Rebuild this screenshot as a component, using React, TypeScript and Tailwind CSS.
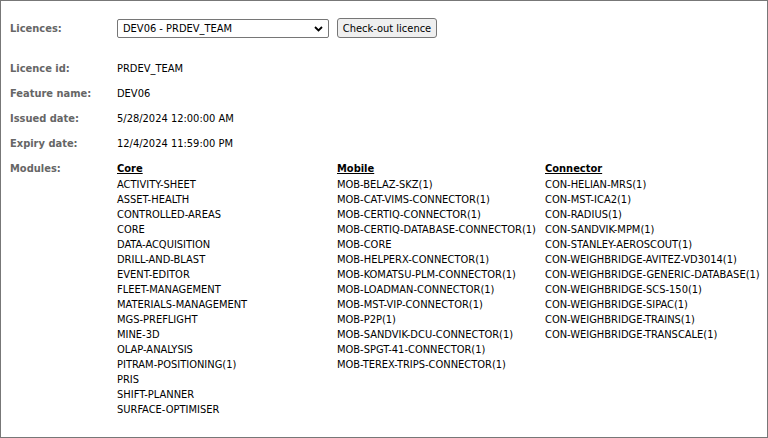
import React, { useState } from "react";

const core = [
  "ACTIVITY-SHEET",
  "ASSET-HEALTH",
  "CONTROLLED-AREAS",
  "CORE",
  "DATA-ACQUISITION",
  "DRILL-AND-BLAST",
  "EVENT-EDITOR",
  "FLEET-MANAGEMENT",
  "MATERIALS-MANAGEMENT",
  "MGS-PREFLIGHT",
  "MINE-3D",
  "OLAP-ANALYSIS",
  "PITRAM-POSITIONING(1)",
  "PRIS",
  "SHIFT-PLANNER",
  "SURFACE-OPTIMISER",
];

const mobile = [
  "MOB-BELAZ-SKZ(1)",
  "MOB-CAT-VIMS-CONNECTOR(1)",
  "MOB-CERTIQ-CONNECTOR(1)",
  "MOB-CERTIQ-DATABASE-CONNECTOR(1)",
  "MOB-CORE",
  "MOB-HELPERX-CONNECTOR(1)",
  "MOB-KOMATSU-PLM-CONNECTOR(1)",
  "MOB-LOADMAN-CONNECTOR(1)",
  "MOB-MST-VIP-CONNECTOR(1)",
  "MOB-P2P(1)",
  "MOB-SANDVIK-DCU-CONNECTOR(1)",
  "MOB-SPGT-41-CONNECTOR(1)",
  "MOB-TEREX-TRIPS-CONNECTOR(1)",
];

const connector = [
  "CON-HELIAN-MRS(1)",
  "CON-MST-ICA2(1)",
  "CON-RADIUS(1)",
  "CON-SANDVIK-MPM(1)",
  "CON-STANLEY-AEROSCOUT(1)",
  "CON-WEIGHBRIDGE-AVITEZ-VD3014(1)",
  "CON-WEIGHBRIDGE-GENERIC-DATABASE(1)",
  "CON-WEIGHBRIDGE-SCS-150(1)",
  "CON-WEIGHBRIDGE-SIPAC(1)",
  "CON-WEIGHBRIDGE-TRAINS(1)",
  "CON-WEIGHBRIDGE-TRANSCALE(1)",
];

const font = '"DejaVu Sans Condensed", "DejaVu Sans", sans-serif';

// label + value row
function InfoRow({ label, value }: { label: string; value: string }) {
  return (
    <div className="flex h-[25px]">
      <div className="w-[107px] font-bold text-[#666666]">{label}</div>
      <div>{value}</div>
    </div>
  );
}

function ModuleColumn({ title, items, width }: { title: string; items: string[]; width: string }) {
  return (
    <div className={width + " whitespace-nowrap"}>
      <div className="font-bold underline h-[16px]">{title}</div>
      {items.map((m) => (
        <div key={m}>{m}</div>
      ))}
    </div>
  );
}

export default function App() {
  const [licence, setLicence] = useState("DEV06 - PRDEV_TEAM");

  return (
    <div
      className="w-[768px] h-[438px] border border-[#777777] bg-white text-black text-[11px] leading-[15px]"
      style={{ fontFamily: font }}
    >
      <div className="pl-[9px] pt-[17px]">
        {/* Licence picker */}
        <div className="flex items-center h-[20px]">
          <div className="w-[107px] font-bold text-[#666666]">Licences:</div>
          <div className="relative w-[212px] h-[19px]">
            <select
              value={licence}
              onChange={(e) => setLicence(e.target.value)}
              className="appearance-none w-full h-full border border-[#767676] rounded-[2px] bg-white pl-[5px] text-[11px] leading-[15px] text-black outline-none"
              style={{ fontFamily: font }}
            >
              <option>DEV06 - PRDEV_TEAM</option>
            </select>
            <svg
              className="absolute right-[6px] top-[7px] pointer-events-none"
              width="9"
              height="6"
              viewBox="0 0 9 6"
            >
              <path d="M1 1 L4.5 4.5 L8 1" stroke="#000" strokeWidth="1.8" fill="none" />
            </svg>
          </div>
          <button
            className="ml-[8px] h-[20px] w-[100px] border border-[#767676] rounded-[3px] bg-[#efefef] text-[11px] text-black"
            style={{ fontFamily: font }}
          >
            Check-out licence
          </button>
        </div>

        <div className="pt-[23px]">
          <InfoRow label="Licence id:" value="PRDEV_TEAM" />
          <InfoRow label="Feature name:" value="DEV06" />
          <InfoRow label="Issued date:" value="5/28/2024 12:00:00 AM" />
          <InfoRow label="Expiry date:" value="12/4/2024 11:59:00 PM" />

          <div className="flex">
            <div className="w-[107px] font-bold text-[#666666]">Modules:</div>
            <ModuleColumn title="Core" items={core} width="w-[220px]" />
            <ModuleColumn title="Mobile" items={mobile} width="w-[208px]" />
            <ModuleColumn title="Connector" items={connector} width="w-[220px]" />
          </div>
        </div>
      </div>
    </div>
  );
}
